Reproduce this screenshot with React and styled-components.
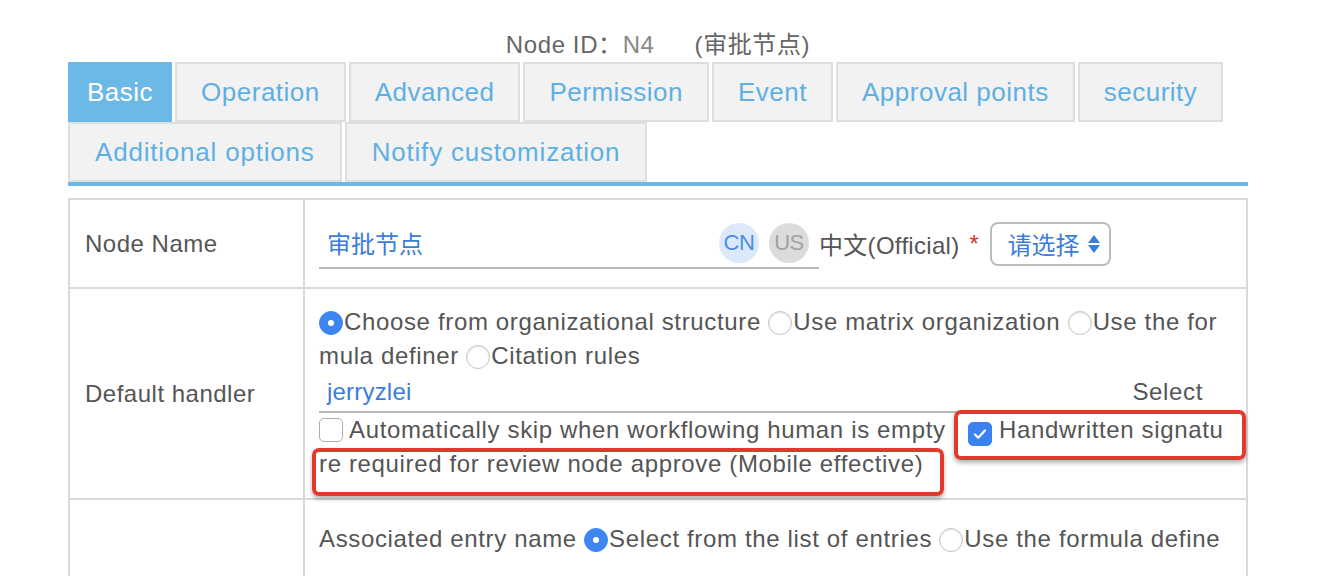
import React from "react"
import styled, { createGlobalStyle } from "styled-components"

const GlobalStyle = createGlobalStyle`
  body {
    margin: 0;
    background: #fff;
    font-family: "Liberation Sans", "Noto Sans CJK SC", sans-serif;
  }
`

const Page = styled.div`
  width: 1180px;
  margin-left: 68px;
`

const Header = styled.div`
  box-sizing: border-box;
  height: 62px;
  padding-top: 31px;
  line-height: 28px;
  text-align: center;
  font-size: 24px;
  letter-spacing: 0.6px;
  color: #666;
`

const NodeId = styled.span`
  color: #888;
  margin-right: 40px;
`

const TabBar = styled.div`
  display: flex;
  flex-wrap: wrap;
  border-bottom: 4px solid #6cb8e6;
`

const Tab = styled.div`
  box-sizing: border-box;
  height: 60px;
  line-height: 56px;
  padding: 0 ${(p) => (p.$active ? "17px" : p.$wide ? "25px" : "24px")};
  margin-right: 3px;
  border: 2px solid ${(p) => (p.$active ? "#6cb8e6" : "#dedede")};
  background: ${(p) => (p.$active ? "#6cb8e6" : "#f2f2f2")};
  color: ${(p) => (p.$active ? "#fff" : "#5fb0e2")};
  font-size: 26px;
  letter-spacing: ${(p) => (p.$wide ? "0.8px" : "0.5px")};
  white-space: nowrap;
`

const Table = styled.table`
  margin-top: 12px;
  width: 1180px;
  table-layout: fixed;
  border-collapse: collapse;
  font-size: 24px;
  letter-spacing: 0.65px;
  color: #555;
`

const Label = styled.td`
  width: 235px;
  box-sizing: border-box;
  border: 2px solid #d9d9d9;
  padding: 0 15px;
  vertical-align: middle;
  letter-spacing: 0.5px;
`

const Value = styled.td`
  border: 2px solid #d9d9d9;
  padding: ${(p) => p.$pad || "0 17px 0 14px"};
  vertical-align: ${(p) => p.$align || "middle"};
  height: ${(p) => p.$h}px;
  box-sizing: border-box;
`

const NameRow = styled.div`
  display: flex;
  align-items: center;
`

const NameInput = styled.div`
  box-sizing: border-box;
  width: 500px;
  height: 50px;
  display: flex;
  align-items: center;
  gap: 10px;
  padding: 0 10px 0 8px;
  border-bottom: 2px solid #bbb;
  color: #3b7dd8;
  letter-spacing: 0;
`

const NameText = styled.span`
  flex: 1;
`

const Lang = styled.span`
  width: 40px;
  height: 40px;
  border-radius: 50%;
  display: flex;
  align-items: center;
  justify-content: center;
  font-size: 22px;
  letter-spacing: -0.5px;
  background: ${(p) => (p.$on ? "#dce9fb" : "#dcdcdc")};
  color: ${(p) => (p.$on ? "#4a8ee8" : "#a2a2a2")};
`

const LangName = styled.span`
  letter-spacing: 0.3px;
`

const Required = styled.span`
  color: #d9362b;
  margin: 0 10px;
`

const Select = styled.div`
  box-sizing: border-box;
  height: 44px;
  padding: 0 9px 0 16px;
  display: flex;
  align-items: center;
  gap: 8px;
  border: 2px solid #bdbdbd;
  border-radius: 8px;
  color: #3b7dd8;
  letter-spacing: 0;
`

const Arrows = styled.span`
  display: flex;
  flex-direction: column;
  gap: 2px;
`

const Content = styled.div`
  position: relative;
`

const Lines = styled.div`
  line-height: 34px;
  word-break: break-all;
`

const ClipLine = styled.div`
  line-height: 34px;
  white-space: nowrap;
  overflow: hidden;
`

const Radio = styled.span`
  display: inline-block;
  box-sizing: border-box;
  width: 24px;
  height: 24px;
  border-radius: 50%;
  vertical-align: -5px;
  margin-right: 1px;
  position: relative;
  background: ${(p) => (p.$checked ? "#3d86f0" : "#fff")};
  border: 1px solid ${(p) => (p.$checked ? "#3d86f0" : "#c4c4c4")};
  box-shadow: ${(p) => (p.$checked ? "none" : "inset 0 1px 2px rgba(0,0,0,0.12)")};
  &::after {
    content: "";
    display: ${(p) => (p.$checked ? "block" : "none")};
    position: absolute;
    left: 8px;
    top: 8px;
    width: 6px;
    height: 6px;
    border-radius: 50%;
    background: #fff;
  }
`

const Picker = styled.div`
  box-sizing: border-box;
  height: 40px;
  display: flex;
  align-items: center;
  justify-content: space-between;
  padding: 0 26px 0 8px;
  border-bottom: 2px solid #bbb;
`

const Picked = styled.span`
  color: #3b7dd8;
  letter-spacing: 0.2px;
`

const Box = styled.span`
  display: inline-flex;
  align-items: center;
  justify-content: center;
  box-sizing: border-box;
  width: 24px;
  height: 24px;
  border-radius: 5px;
  vertical-align: -4px;
  margin-left: ${(p) => p.$gap || 0}px;
  background: ${(p) => (p.$checked ? "#3b82f0" : "#fff")};
  border: 1.5px solid ${(p) => (p.$checked ? "#3b82f0" : "#adadad")};
`

const Note = styled.div`
  position: absolute;
  left: ${(p) => p.$x}px;
  top: ${(p) => p.$y}px;
  width: ${(p) => p.$w}px;
  height: ${(p) => p.$h}px;
  box-sizing: border-box;
  border: 4px solid #e3392c;
  border-radius: 7px;
  box-shadow: 0 3px 4px rgba(0, 0, 0, 0.3);
  pointer-events: none;
`

const tabs = [
  "Basic",
  "Operation",
  "Advanced",
  "Permission",
  "Event",
  "Approval points",
  "security",
  "Additional options",
  "Notify customization",
]

const Check = () => (
  <svg width="16" height="16" viewBox="0 0 16 16">
    <path d="M3 8.5l3.2 3.2L13 4.5" fill="none" stroke="#fff" strokeWidth="2.2" strokeLinecap="round" strokeLinejoin="round" />
  </svg>
)

export default function App() {
  return (
    <Page>
      <GlobalStyle />
      <Header>
        <NodeId>
          <span style={{ color: "#666" }}>Node ID：</span>N4
        </NodeId>
        (审批节点)
      </Header>

      <TabBar>
        {tabs.map((t, i) => (
          <Tab key={t} $active={i === 0} $wide={i > 6}>
            {t}
          </Tab>
        ))}
      </TabBar>

      <Table>
        <colgroup>
          <col style={{ width: 235 }} />
          <col />
        </colgroup>
        <tbody>
          <tr>
            <Label style={{ height: 89 }}>Node Name</Label>
            <Value $h={89}>
              <NameRow>
                <NameInput>
                  <NameText>审批节点</NameText>
                  <Lang $on>CN</Lang>
                  <Lang>US</Lang>
                </NameInput>
                <LangName>中文(Official)</LangName>
                <Required>*</Required>
                <Select>
                  请选择
                  <Arrows>
                    <svg width="12" height="8" viewBox="0 0 12 8">
                      <path d="M6 0L12 8H0z" fill="#3b7dd8" />
                    </svg>
                    <svg width="12" height="8" viewBox="0 0 12 8">
                      <path d="M0 0h12L6 8z" fill="#3b7dd8" />
                    </svg>
                  </Arrows>
                </Select>
              </NameRow>
            </Value>
          </tr>
          <tr>
            <Label>Default handler</Label>
            <Value $h={211} $pad="16px 17px 16px 14px" $align="top">
              <Content>
                <Lines>
                  <Radio $checked />Choose from organizational structure <Radio />Use matrix organization{" "}
                  <Radio />Use the formula definer <Radio />Citation rules
                </Lines>
                <Picker>
                  <Picked>jerryzlei</Picked>
                  <span>Select</span>
                </Picker>
                <Lines>
                  <Box /> Automatically skip when workflowing human is empty
                  <Box $checked $gap={22}>
                    <Check />
                  </Box>{" "}
                  Handwritten signature required for review node approve (Mobile effective)
                </Lines>
                <Note $x={635} $y={105} $w={292} $h={50} />
                <Note $x={-7} $y={143} $w={632} $h={48} />
              </Content>
            </Value>
          </tr>
          <tr>
            <Label />
            <Value $h={100} $pad="22px 27px 0 14px" $align="top">
              <ClipLine>
                Associated entry name <Radio $checked />Select from the list of entries <Radio />Use the formula definer
              </ClipLine>
            </Value>
          </tr>
        </tbody>
      </Table>
    </Page>
  )
}
